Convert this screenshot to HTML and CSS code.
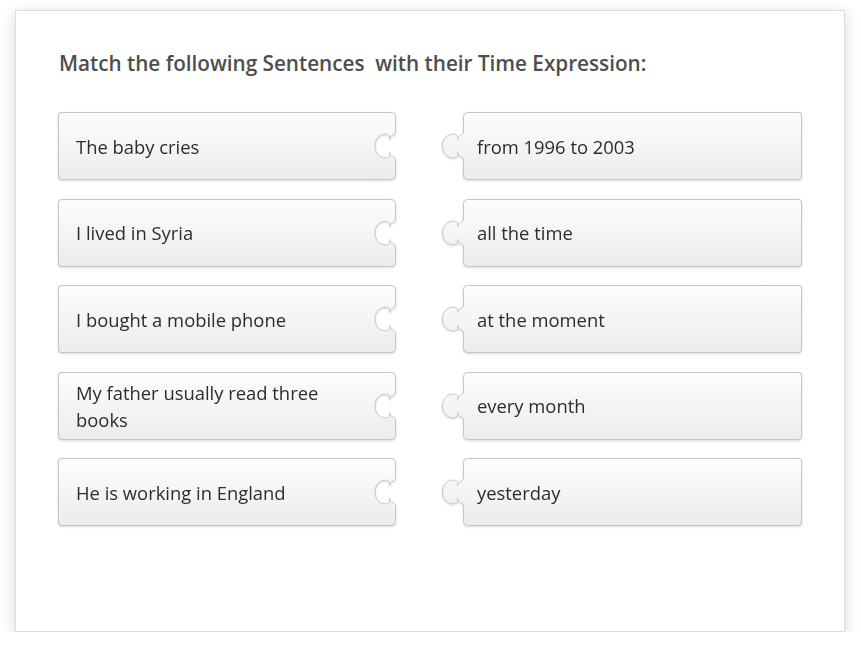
FILE: index.html
```html
<!DOCTYPE html>
<html>
<head>
<meta charset="utf-8">
<link rel="stylesheet" href="styles.css">
</head>
<body>
<div class="card">
  <h1 class="title">Match the following Sentences&nbsp; with their Time Expression:</h1>
  <div class="board">
    <div class="piece piece-left">
      <div class="body"><span>The baby cries</span></div>
      <svg class="edge" width="30" height="68" viewBox="0 0 30 68"><defs><linearGradient id="g1" x1="0" y1="0" x2="0" y2="1"><stop offset="0" stop-color="#fdfdfd"/><stop offset="1" stop-color="#ececec"/></linearGradient></defs><path class="fill" fill="url(#g1)" d="M0 0.5H25.5Q29.5 0.5 29.5 4.5V20C29.5 24 23.5 23 23.5 27.5C27.5 20 9 19 9 34C9 49 27.5 48 23.5 40.5C23.5 45 29.5 44 29.5 48V63.5Q29.5 67.5 25.5 67.5H0Z"/><path class="line" d="M0 0.5H25.5Q29.5 0.5 29.5 4.5V20C29.5 24 23.5 23 23.5 27.5C27.5 20 9 19 9 34C9 49 27.5 48 23.5 40.5C23.5 45 29.5 44 29.5 48V63.5Q29.5 67.5 25.5 67.5H0"/></svg>
    </div>
    <div class="piece piece-right">
      <svg class="edge" width="30" height="68" viewBox="0 0 30 68"><defs><linearGradient id="g2" x1="0" y1="0" x2="0" y2="1"><stop offset="0" stop-color="#fdfdfd"/><stop offset="1" stop-color="#ececec"/></linearGradient></defs><path class="fill" fill="url(#g2)" d="M30 0.5H26.5Q22.5 0.5 22.5 4.5V20C22.5 24 16.5 23 16.5 27.5C20.5 20 1.5 19 1.5 34C1.5 49 20.5 48 16.5 40.5C16.5 45 22.5 44 22.5 48V63.5Q22.5 67.5 26.5 67.5H30Z"/><path class="line" d="M30 0.5H26.5Q22.5 0.5 22.5 4.5V20C22.5 24 16.5 23 16.5 27.5C20.5 20 1.5 19 1.5 34C1.5 49 20.5 48 16.5 40.5C16.5 45 22.5 44 22.5 48V63.5Q22.5 67.5 26.5 67.5H30"/></svg>
      <div class="body"><span>from 1996 to 2003</span></div>
    </div>

    <div class="piece piece-left">
      <div class="body"><span>I lived in Syria</span></div>
      <svg class="edge" width="30" height="68" viewBox="0 0 30 68"><path class="fill" fill="url(#g1)" d="M0 0.5H25.5Q29.5 0.5 29.5 4.5V20C29.5 24 23.5 23 23.5 27.5C27.5 20 9 19 9 34C9 49 27.5 48 23.5 40.5C23.5 45 29.5 44 29.5 48V63.5Q29.5 67.5 25.5 67.5H0Z"/><path class="line" d="M0 0.5H25.5Q29.5 0.5 29.5 4.5V20C29.5 24 23.5 23 23.5 27.5C27.5 20 9 19 9 34C9 49 27.5 48 23.5 40.5C23.5 45 29.5 44 29.5 48V63.5Q29.5 67.5 25.5 67.5H0"/></svg>
    </div>
    <div class="piece piece-right">
      <svg class="edge" width="30" height="68" viewBox="0 0 30 68"><path class="fill" fill="url(#g2)" d="M30 0.5H26.5Q22.5 0.5 22.5 4.5V20C22.5 24 16.5 23 16.5 27.5C20.5 20 1.5 19 1.5 34C1.5 49 20.5 48 16.5 40.5C16.5 45 22.5 44 22.5 48V63.5Q22.5 67.5 26.5 67.5H30Z"/><path class="line" d="M30 0.5H26.5Q22.5 0.5 22.5 4.5V20C22.5 24 16.5 23 16.5 27.5C20.5 20 1.5 19 1.5 34C1.5 49 20.5 48 16.5 40.5C16.5 45 22.5 44 22.5 48V63.5Q22.5 67.5 26.5 67.5H30"/></svg>
      <div class="body"><span>all the time</span></div>
    </div>

    <div class="piece piece-left">
      <div class="body"><span>I bought a mobile phone</span></div>
      <svg class="edge" width="30" height="68" viewBox="0 0 30 68"><path class="fill" fill="url(#g1)" d="M0 0.5H25.5Q29.5 0.5 29.5 4.5V20C29.5 24 23.5 23 23.5 27.5C27.5 20 9 19 9 34C9 49 27.5 48 23.5 40.5C23.5 45 29.5 44 29.5 48V63.5Q29.5 67.5 25.5 67.5H0Z"/><path class="line" d="M0 0.5H25.5Q29.5 0.5 29.5 4.5V20C29.5 24 23.5 23 23.5 27.5C27.5 20 9 19 9 34C9 49 27.5 48 23.5 40.5C23.5 45 29.5 44 29.5 48V63.5Q29.5 67.5 25.5 67.5H0"/></svg>
    </div>
    <div class="piece piece-right">
      <svg class="edge" width="30" height="68" viewBox="0 0 30 68"><path class="fill" fill="url(#g2)" d="M30 0.5H26.5Q22.5 0.5 22.5 4.5V20C22.5 24 16.5 23 16.5 27.5C20.5 20 1.5 19 1.5 34C1.5 49 20.5 48 16.5 40.5C16.5 45 22.5 44 22.5 48V63.5Q22.5 67.5 26.5 67.5H30Z"/><path class="line" d="M30 0.5H26.5Q22.5 0.5 22.5 4.5V20C22.5 24 16.5 23 16.5 27.5C20.5 20 1.5 19 1.5 34C1.5 49 20.5 48 16.5 40.5C16.5 45 22.5 44 22.5 48V63.5Q22.5 67.5 26.5 67.5H30"/></svg>
      <div class="body"><span>at the moment</span></div>
    </div>

    <div class="piece piece-left">
      <div class="body"><span>My father usually read three books</span></div>
      <svg class="edge" width="30" height="68" viewBox="0 0 30 68"><path class="fill" fill="url(#g1)" d="M0 0.5H25.5Q29.5 0.5 29.5 4.5V20C29.5 24 23.5 23 23.5 27.5C27.5 20 9 19 9 34C9 49 27.5 48 23.5 40.5C23.5 45 29.5 44 29.5 48V63.5Q29.5 67.5 25.5 67.5H0Z"/><path class="line" d="M0 0.5H25.5Q29.5 0.5 29.5 4.5V20C29.5 24 23.5 23 23.5 27.5C27.5 20 9 19 9 34C9 49 27.5 48 23.5 40.5C23.5 45 29.5 44 29.5 48V63.5Q29.5 67.5 25.5 67.5H0"/></svg>
    </div>
    <div class="piece piece-right">
      <svg class="edge" width="30" height="68" viewBox="0 0 30 68"><path class="fill" fill="url(#g2)" d="M30 0.5H26.5Q22.5 0.5 22.5 4.5V20C22.5 24 16.5 23 16.5 27.5C20.5 20 1.5 19 1.5 34C1.5 49 20.5 48 16.5 40.5C16.5 45 22.5 44 22.5 48V63.5Q22.5 67.5 26.5 67.5H30Z"/><path class="line" d="M30 0.5H26.5Q22.5 0.5 22.5 4.5V20C22.5 24 16.5 23 16.5 27.5C20.5 20 1.5 19 1.5 34C1.5 49 20.5 48 16.5 40.5C16.5 45 22.5 44 22.5 48V63.5Q22.5 67.5 26.5 67.5H30"/></svg>
      <div class="body"><span>every month</span></div>
    </div>

    <div class="piece piece-left">
      <div class="body"><span>He is working in England</span></div>
      <svg class="edge" width="30" height="68" viewBox="0 0 30 68"><path class="fill" fill="url(#g1)" d="M0 0.5H25.5Q29.5 0.5 29.5 4.5V20C29.5 24 23.5 23 23.5 27.5C27.5 20 9 19 9 34C9 49 27.5 48 23.5 40.5C23.5 45 29.5 44 29.5 48V63.5Q29.5 67.5 25.5 67.5H0Z"/><path class="line" d="M0 0.5H25.5Q29.5 0.5 29.5 4.5V20C29.5 24 23.5 23 23.5 27.5C27.5 20 9 19 9 34C9 49 27.5 48 23.5 40.5C23.5 45 29.5 44 29.5 48V63.5Q29.5 67.5 25.5 67.5H0"/></svg>
    </div>
    <div class="piece piece-right">
      <svg class="edge" width="30" height="68" viewBox="0 0 30 68"><path class="fill" fill="url(#g2)" d="M30 0.5H26.5Q22.5 0.5 22.5 4.5V20C22.5 24 16.5 23 16.5 27.5C20.5 20 1.5 19 1.5 34C1.5 49 20.5 48 16.5 40.5C16.5 45 22.5 44 22.5 48V63.5Q22.5 67.5 26.5 67.5H30Z"/><path class="line" d="M30 0.5H26.5Q22.5 0.5 22.5 4.5V20C22.5 24 16.5 23 16.5 27.5C20.5 20 1.5 19 1.5 34C1.5 49 20.5 48 16.5 40.5C16.5 45 22.5 44 22.5 48V63.5Q22.5 67.5 26.5 67.5H30"/></svg>
      <div class="body"><span>yesterday</span></div>
    </div>
  </div>
</div>
</body>
</html>
```

FILE: styles.css
```css
* { box-sizing: border-box; }
html, body { margin: 0; padding: 0; background: #fff; }
body {
  font-family: "Open Sans", "Liberation Sans", sans-serif;
  padding: 10px 0 0 15px;
}
.card {
  width: 830px;
  height: 622px;
  border: 1px solid #dcdcdc;
  background: #fff;
  box-shadow: 0 4px 14px rgba(0,0,0,0.16);
  padding: 38px 0 0 43px;
}
.title {
  margin: 0;
  font-size: 20.7px;
  font-weight: 600;
  line-height: 28px;
  color: #4e4e4e;
}
.board {
  margin-top: 35px;
  display: grid;
  grid-template-columns: 338px 361px;
  column-gap: 45px;
  row-gap: 18.5px;
  margin-left: -1px;
}
.piece {
  display: flex;
  height: 68px;
  filter: drop-shadow(0 1px 1px rgba(0,0,0,0.14));
}
.edge { display: block; flex: none; }
.edge .fill { stroke: none; }
.edge .line { fill: none; stroke: #c6c6c6; stroke-width: 1; }
.body {
  flex: 1;
  display: flex;
  align-items: center;
  background: linear-gradient(#fdfdfd, #ececec);
  border: 1px solid #c6c6c6;
  font-size: 18.4px;
  line-height: 27px;
  color: #2c2c2c;
}
.piece-left .body {
  border-right: none;
  border-radius: 4px 0 0 4px;
  padding: 0 6px 0 17px;
}
.piece-right .body {
  border-left: none;
  border-radius: 0 4px 4px 0;
  padding: 0 10px 0 6px;
}
```
